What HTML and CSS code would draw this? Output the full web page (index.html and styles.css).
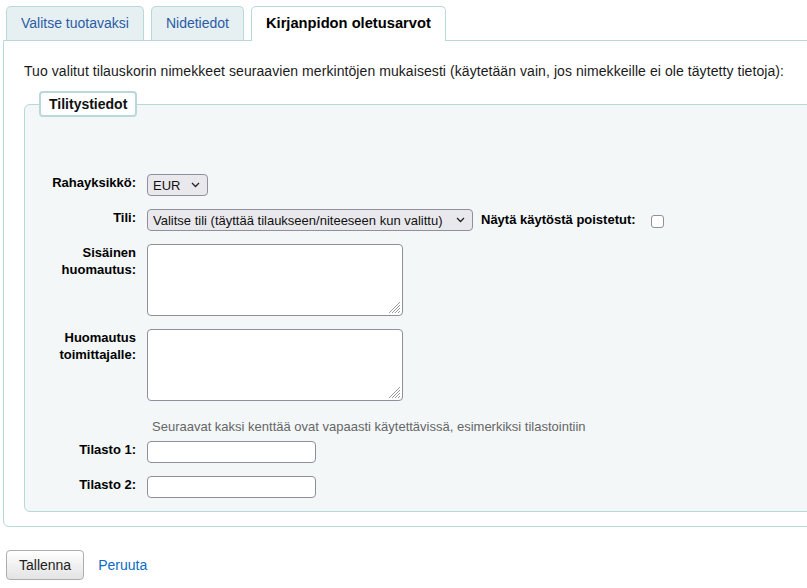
FILE: index.html
```html
<!DOCTYPE html>
<html lang="fi">
<head>
<meta charset="utf-8">
<title>Kirjanpidon oletusarvot</title>
<link rel="stylesheet" href="styles.css">
</head>
<body>
<div class="page">
  <ul class="tablist">
    <li class="tab"><a href="#">Valitse tuotavaksi</a></li>
    <li class="tab"><a href="#">Nidetiedot</a></li>
    <li class="tab active"><a href="#">Kirjanpidon oletusarvot</a></li>
  </ul>
  <div class="panel">
    <p class="intro">Tuo valitut tilauskorin nimekkeet seuraavien merkintöjen mukaisesti (käytetään vain, jos nimekkeille ei ole täytetty tietoja):</p>
    <fieldset class="rows">
      <legend>Tilitystiedot</legend>
      <ol class="fields">
        <li class="row">
          <label class="lbl" for="cur">Rahayksikkö:</label>
          <select id="cur" class="sel sel-cur"><option>EUR</option></select>
        </li>
        <li class="row">
          <label class="lbl" for="fund">Tili:</label>
          <select id="fund" class="sel sel-fund"><option>Valitse tili (täyttää tilaukseen/niteeseen kun valittu)</option></select>
          <label class="inline-lbl" for="showall">Näytä käytöstä poistetut:</label>
          <input type="checkbox" id="showall" class="chk">
        </li>
        <li class="row">
          <label class="lbl" for="n1">Sisäinen huomautus:</label>
          <span class="ta-wrap">
            <textarea id="n1" class="ta"></textarea>
            <svg class="grip" width="13" height="13" viewBox="0 0 13 13"><path d="M12 1L1 12M12 4L4 12M12 7L7 12M12 10L10 12" stroke="#9a9a9a" stroke-width="1"/></svg>
          </span>
        </li>
        <li class="row">
          <label class="lbl" for="n2">Huomautus toimittajalle:</label>
          <span class="ta-wrap">
            <textarea id="n2" class="ta"></textarea>
            <svg class="grip" width="13" height="13" viewBox="0 0 13 13"><path d="M12 1L1 12M12 4L4 12M12 7L7 12M12 10L10 12" stroke="#9a9a9a" stroke-width="1"/></svg>
          </span>
        </li>
        <li class="hint">Seuraavat kaksi kenttää ovat vapaasti käytettävissä, esimerkiksi tilastointiin</li>
        <li class="row row-after-hint">
          <label class="lbl" for="s1">Tilasto 1:</label>
          <input type="text" id="s1" class="txt">
        </li>
        <li class="row">
          <label class="lbl" for="s2">Tilasto 2:</label>
          <input type="text" id="s2" class="txt">
        </li>
      </ol>
    </fieldset>
  </div>
  <div class="actions">
    <button type="button" class="btn">Tallenna</button>
    <a href="#" class="cancel">Peruuta</a>
  </div>
</div>
</body>
</html>
```

FILE: styles.css
```css
html, body {
  margin: 0;
  padding: 0;
  overflow: hidden;
}
body {
  font-family: "Liberation Sans", Arial, sans-serif;
  font-size: 14px;
  color: #1a1a1a;
  background: #ffffff;
}
.page {
  width: 100%;
}
.tablist {
  display: flex;
  gap: 7px;
  list-style: none;
  margin: 0;
  padding: 6px 0 0 6px;
  position: relative;
  z-index: 2;
}
.tab {
  border: 1px solid #b9d8d9;
  border-bottom: 0;
  border-radius: 5px 5px 0 0;
  background: #e6eff1;
  height: 33px;
}
.tab a {
  display: block;
  padding: 0 14px;
  line-height: 32px;
  color: #2b5ca6;
  text-decoration: none;
  font-size: 14px;
}
.tab.active {
  background: #ffffff;
  height: 34px;
  margin-bottom: -1px;
}
.tab.active a {
  color: #000;
  font-weight: bold;
  font-size: 14.7px;
}
.panel {
  margin-left: 3px;
  margin-right: -40px;
  border: 1px solid #b9d8d9;
  border-radius: 0 0 6px 6px;
  padding: 22px 20px 14px 20px;
}
.intro {
  margin: 0 0 11px 0;
  line-height: 17px;
  font-size: 14px;
  letter-spacing: 0.07px;
  color: #1a1a1a;
}
.rows {
  margin: 0;
  padding: 0;
  border: 1px solid #b9d8d9;
  border-radius: 6px;
  background: #f3f7f8;
}
.rows legend {
  margin-left: 14px;
  padding: 0 8px;
  border: 2px solid #b9d8d9;
  border-radius: 4px;
  background: #ffffff;
  font-weight: bold;
  font-size: 14px;
  line-height: 22px;
  color: #111;
}
.fields {
  list-style: none;
  margin: 0;
  padding: 57px 0 13px 21px;
}
.row {
  display: flex;
  align-items: flex-start;
  margin-top: 13px;
}
.row:first-child {
  margin-top: 0;
}
.lbl {
  width: 90px;
  margin-right: 11px;
  text-align: right;
  font-weight: bold;
  font-size: 13px;
  line-height: 17px;
  color: #000;
  flex: none;
}
.sel {
  -webkit-appearance: none;
  appearance: none;
  box-sizing: border-box;
  height: 22px;
  border: 1px solid #8f8f9d;
  border-radius: 4px;
  background-color: #e9e9ed;
  background-image: url("data:image/svg+xml,%3Csvg xmlns='http://www.w3.org/2000/svg' width='9' height='6' viewBox='0 0 9 6'%3E%3Cpath d='M1 1l3.5 3.5L8 1' fill='none' stroke='%23222' stroke-width='1.3'/%3E%3C/svg%3E");
  background-repeat: no-repeat;
  background-position: right 7px center;
  font-family: "Liberation Sans", Arial, sans-serif;
  font-size: 13px;
  color: #111;
  padding: 0 20px 0 5px;
  margin: 0;
}
.sel-cur {
  width: 61px;
}
.sel-fund {
  width: 326px;
}
.inline-lbl {
  margin-left: 8px;
  font-weight: bold;
  font-size: 13px;
  line-height: 17px;
  padding-top: 2px;
  color: #000;
}
.chk {
  -webkit-appearance: none;
  appearance: none;
  width: 13px;
  height: 13px;
  box-sizing: border-box;
  border: 1px solid #8f8f9d;
  border-radius: 3px;
  background: #fff;
  margin: 6px 0 0 15px;
}
.ta-wrap {
  position: relative;
  display: block;
  width: 256px;
  height: 72px;
}
.ta {
  box-sizing: border-box;
  display: block;
  width: 256px;
  height: 72px;
  margin: 0;
  border: 1px solid #8f8f9d;
  border-radius: 4px;
  background: #fff;
  resize: none;
}
.grip {
  position: absolute;
  right: 2px;
  bottom: 2px;
}
.hint {
  margin-top: 17px;
  padding-left: 106px;
  font-size: 13px;
  line-height: 17px;
  color: #666;
}
.row-after-hint {
  margin-top: 6px;
}
.txt {
  box-sizing: border-box;
  width: 169px;
  height: 22px;
  margin: 0;
  border: 1px solid #8f8f9d;
  border-radius: 4px;
  background: #fff;
}
.actions {
  display: flex;
  align-items: center;
  gap: 14px;
  margin: 23px 0 0 6px;
}
.btn {
  box-sizing: border-box;
  height: 30px;
  padding: 0 12px;
  border: 1px solid #adadad;
  border-radius: 4px;
  background: linear-gradient(#ffffff, #e3e3e3);
  font-family: "Liberation Sans", Arial, sans-serif;
  font-size: 14px;
  color: #222;
}
.cancel {
  color: #0a6cc4;
  text-decoration: none;
  font-size: 14px;
}
```
